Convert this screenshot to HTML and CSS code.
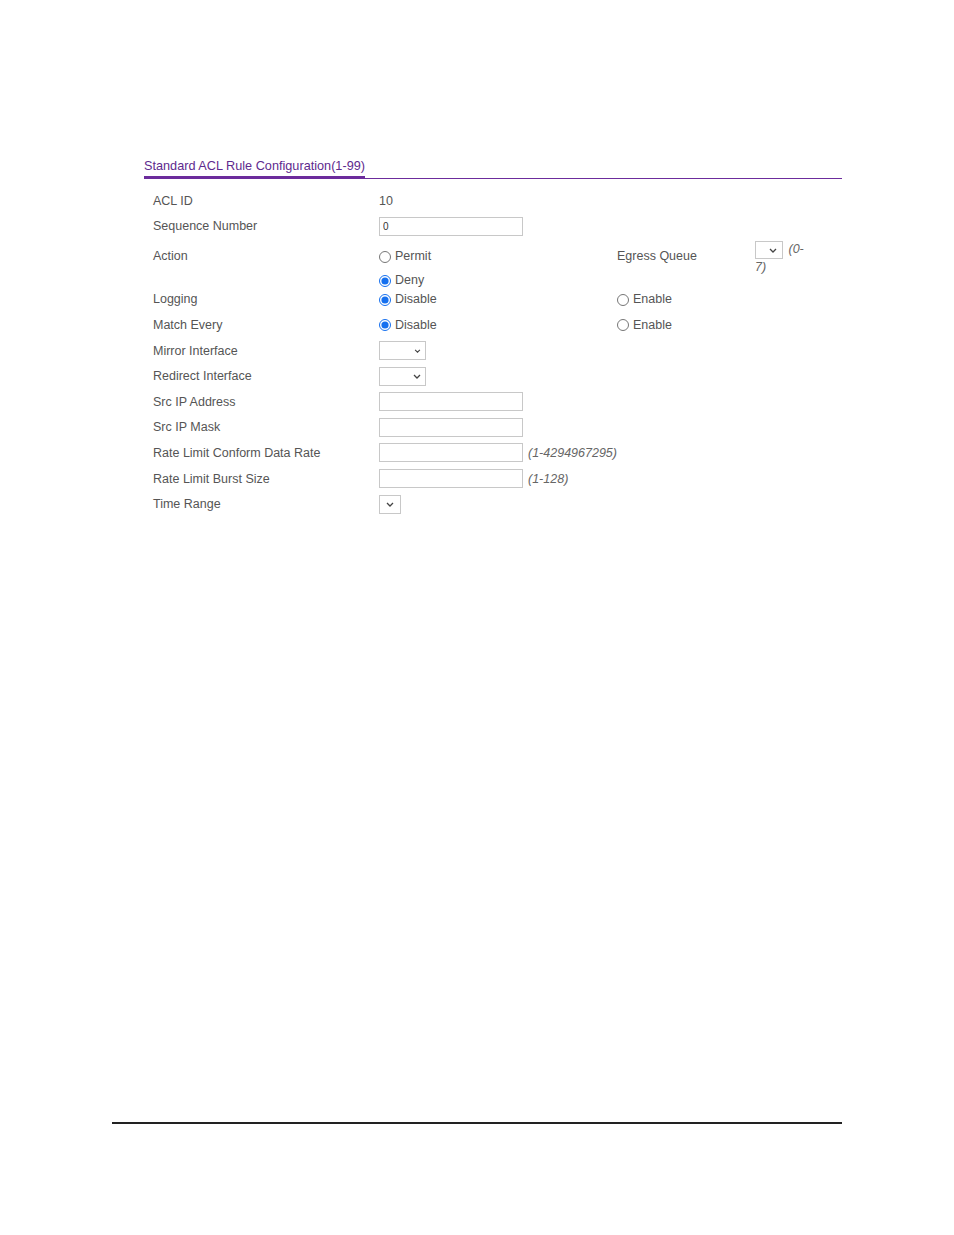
FILE: index.html
```html
<!DOCTYPE html>
<html lang="en">
<head>
    <meta charset="UTF-8">
    <title>Standard ACL Rule Configuration</title>
    <link rel="stylesheet" href="styles.css">
</head>
<body>
    <div class="page">
        <!-- Tab heading -->
        <div class="tab-head">
            <span class="tab-title">Standard ACL Rule Configuration(1-99)</span>
        </div>

        <div class="form">
            <div class="row">
                <div class="label">ACL ID</div>
                <div class="value">10</div>
            </div>
            <div class="row">
                <div class="label">Sequence Number</div>
                <div class="value"><input type="text" class="field" value="0"></div>
            </div>
            <div class="row action-row">
                <div class="label">Action</div>
                <div class="value stack">
                    <label class="opt"><input type="radio" name="action">Permit</label>
                    <label class="opt"><input type="radio" name="action" checked>Deny</label>
                </div>
                <div class="label">Egress Queue</div>
                <div class="queue">
                    <span class="select select-queue"><svg viewBox="0 0 8 5" width="8" height="5"><path d="M1 1l3 3 3-3" fill="none" stroke="#444" stroke-width="1.3"/></svg></span>
                    <span class="hint">(0-7)</span>
                </div>
            </div>
            <div class="row short-row">
                <div class="label">Logging</div>
                <div class="value"><label class="opt"><input type="radio" name="log" checked>Disable</label></div>
                <div class="value"><label class="opt"><input type="radio" name="log">Enable</label></div>
            </div>
            <div class="row">
                <div class="label">Match Every</div>
                <div class="value"><label class="opt"><input type="radio" name="match" checked>Disable</label></div>
                <div class="value"><label class="opt"><input type="radio" name="match">Enable</label></div>
            </div>
            <div class="row">
                <div class="label">Mirror Interface</div>
                <div class="value"><span class="select select-iface"><svg viewBox="0 0 8 5" width="7" height="4"><path d="M1 1l3 3 3-3" fill="none" stroke="#444" stroke-width="1.3"/></svg></span></div>
            </div>
            <div class="row">
                <div class="label">Redirect Interface</div>
                <div class="value"><span class="select select-iface"><svg viewBox="0 0 8 5" width="8" height="5"><path d="M1 1l3 3 3-3" fill="none" stroke="#444" stroke-width="1.3"/></svg></span></div>
            </div>
            <div class="row">
                <div class="label">Src IP Address</div>
                <div class="value"><input type="text" class="field"></div>
            </div>
            <div class="row">
                <div class="label">Src IP Mask</div>
                <div class="value"><input type="text" class="field"></div>
            </div>
            <div class="row">
                <div class="label">Rate Limit Conform Data Rate</div>
                <div class="value wide"><input type="text" class="field"><span class="hint">(1-4294967295)</span></div>
            </div>
            <div class="row">
                <div class="label">Rate Limit Burst Size</div>
                <div class="value wide"><input type="text" class="field"><span class="hint">(1-128)</span></div>
            </div>
            <div class="row">
                <div class="label">Time Range</div>
                <div class="value"><span class="select select-time"><svg viewBox="0 0 8 5" width="8" height="5"><path d="M1 1l3 3 3-3" fill="none" stroke="#444" stroke-width="1.3"/></svg></span></div>
            </div>
        </div>
    </div>
    <div class="page-rule"></div>
</body>
</html>
```

FILE: styles.css
```css
body {
    margin: 0;
    font-family: "Liberation Sans", Arial, sans-serif;
    font-size: 12.5px;
    color: #555;
    background: #fff;
}
.page {
    padding-top: 158px;
    margin-left: 144px;
    width: 698px;
}
.tab-head {
    border-bottom: 1px solid #6c2c9c;
    height: 20px;
}
.tab-title {
    display: inline-block;
    color: #5e2a8e;
    font-size: 12.7px;
    line-height: 17px;
    padding-bottom: 1px;
    border-bottom: 3px solid #6c2c9c;
}
.form {
    margin-top: 9px;
    padding-left: 9px;
}
.row {
    display: grid;
    grid-template-columns: 226px 238px 138px 54px;
    align-items: center;
    height: 25.6px;
}
.action-row {
    height: 47px;
    align-items: start;
}
.action-row .label {
    padding-top: 8px;
    line-height: 18px;
}
.short-row {
    height: 26px;
}
.value {
    display: flex;
    align-items: center;
}
.wide {
    grid-column: span 3;
}
.stack {
    flex-direction: column;
    align-items: flex-start;
    padding-top: 5px;
}
.stack .opt {
    height: 24px;
}
.opt {
    display: flex;
    align-items: center;
}
.opt input {
    width: 12px;
    height: 12px;
    margin: 1px 4px 0 0;
    accent-color: #1570ef;
}
.field {
    box-sizing: border-box;
    width: 144px;
    height: 19px;
    border: 1px solid #c8c8c8;
    padding: 0 3px;
    font-family: "Liberation Sans", Arial, sans-serif;
    font-size: 10px;
    color: #333;
    margin: 0;
}
.hint {
    font-style: italic;
    color: #666;
    margin-left: 5px;
}
.select {
    box-sizing: border-box;
    display: inline-flex;
    align-items: center;
    justify-content: flex-end;
    height: 19px;
    border: 1px solid #c8c8c8;
    background: #fff;
}
.select-iface {
    width: 47px;
    padding-right: 4px;
}
.select-time {
    width: 22px;
    justify-content: center;
}
.select-queue {
    width: 28px;
    height: 18px;
    padding-right: 5px;
    vertical-align: middle;
}
.queue {
    padding-top: 2px;
    line-height: 17px;
}
.queue .hint {
    margin-left: 2px;
}
.page-rule {
    margin: 605px 0 0 112px;
    width: 730px;
    height: 2px;
    background: #222;
}
```
